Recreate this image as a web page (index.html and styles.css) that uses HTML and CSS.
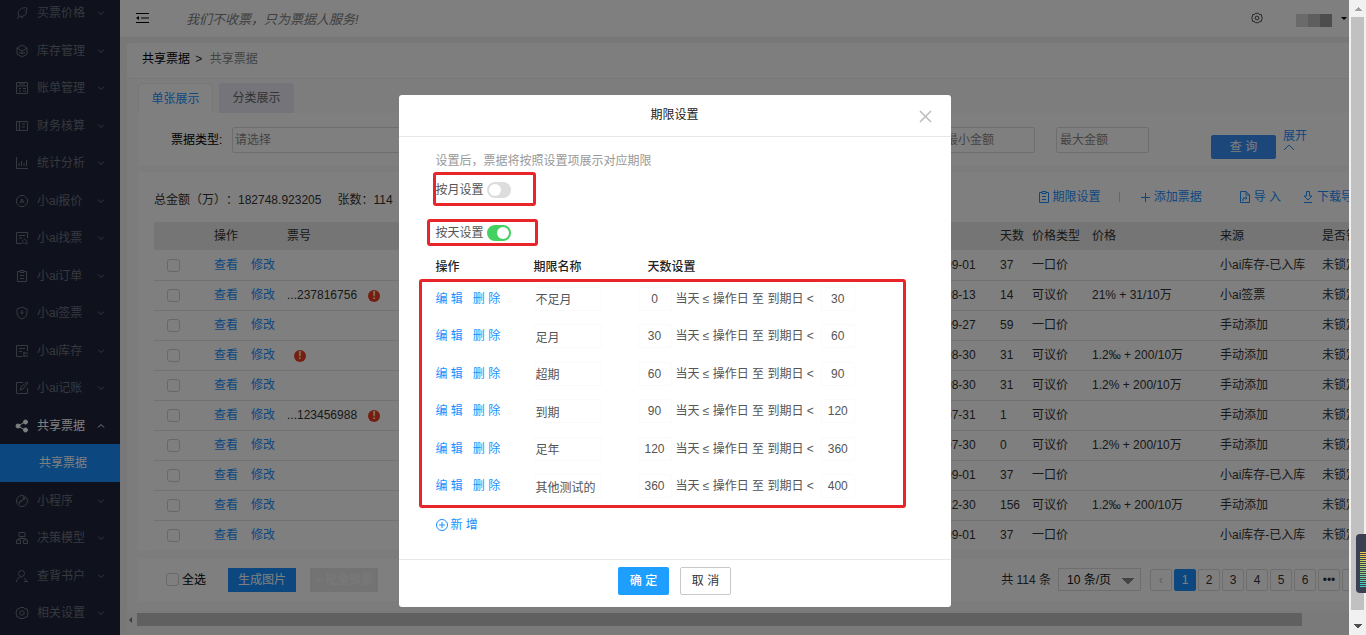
FILE: index.html
```html
<!DOCTYPE html>
<html lang="zh-CN">
<head>
<meta charset="utf-8">
<title>共享票据</title>
<link rel="stylesheet" href="styles.css">
</head>
<body>
<svg class="defs" aria-hidden="true">
  <symbol id="chev" viewBox="0 0 8 8"><path d="M1 2.5 4 5.5 7 2.5"/></symbol>
  <symbol id="rocket" viewBox="0 0 14 14"><path d="M12 2C8 1 4 3 3 7l1 3c2 1 6 0 7-2zM4 10l-2 3M9 5h.5M6 12l2-1"/></symbol>
  <symbol id="cube" viewBox="0 0 14 14"><path d="M7 1l5 3v6l-5 3-5-3V4zM2 4l5 3 5-3M7 7v3M4 8l3 2 3-2"/></symbol>
  <symbol id="bill" viewBox="0 0 14 14"><path d="M1.5 1.5h11v11h-11zM1.500 5h11M4 7.500h2M8 7.500h3M4 10h2M8 10h3M4 3h6"/></symbol>
  <symbol id="book" viewBox="0 0 14 14"><path d="M1.500 2.500h11v9h-11zM4.500 2.500v9M7 5h3M7 8h3"/></symbol>
  <symbol id="chart" viewBox="0 0 14 14"><path d="M1.500 1v11.500H13M4 10V7M6.500 10V5M9 10V7M11.500 10V4"/></symbol>
  <symbol id="tag" viewBox="0 0 14 14"><path d="M5 1.500h4L12.500 5v4L9 12.500H5L1.500 9V5zM5 9l2-4 2 4M6 8h2"/></symbol>
  <symbol id="find" viewBox="0 0 14 14"><path d="M12.500 7V1.500h-11v11H7M4 4.500h6M4 7h3M9.500 8.500a2 2 0 1 0 .1 0M11 12l2 1.500"/></symbol>
  <symbol id="clip" viewBox="0 0 14 14"><path d="M5 2.500H2.500v10h9v-10H9M5 1.500h4v2H5zM5 6.500h4M5 9.500h4"/></symbol>
  <symbol id="shield" viewBox="0 0 14 14"><path d="M7 1l5 2v4c0 3-2 5-5 6-3-1-5-3-5-6V3zM7 4v4M5.500 6.500 7 8l1.500-1.500"/></symbol>
  <symbol id="store" viewBox="0 0 14 14"><path d="M12.500 7V1.500h-11v11H7M4 4.500h6M4 7.500h3M8 9h5M8 12h5M9 8v5"/></symbol>
  <symbol id="edit" viewBox="0 0 14 14"><path d="M8 1.500H1.500v11h11V7M5 9l1-3 6-5 1 1-5 6z"/></symbol>
  <symbol id="share" viewBox="0 0 14 14"><path d="M3 7l7-4M3 7l7 4"/><circle class="dot" cx="3" cy="7" r="2"/><circle class="dot" cx="10.500" cy="3" r="2"/><circle class="dot" cx="10.500" cy="11" r="2"/></symbol>
  <symbol id="mini" viewBox="0 0 14 14"><circle cx="7" cy="7" r="5.500"/><path d="M5 10c-2-1-1-3 1-3s3-3 2-4 4 1 1 3M4 9l6-5"/></symbol>
  <symbol id="model" viewBox="0 0 14 14"><path d="M4 1.500h6v4H4zM1.500 9h4v3.500h-4zM8.500 9h4v3.500h-4zM7 5.500v2M3.500 9V7.500h7V9"/></symbol>
  <symbol id="user" viewBox="0 0 14 14"><circle cx="6.500" cy="4.500" r="3"/><path d="M1.500 13c0-3 2-5 5-5M9 9l4 4M9 12.500h4"/></symbol>
  <symbol id="gear" viewBox="0 0 14 14"><path d="M5 1.500h4l1 1.500h2l1 4-1 4h-2l-1 1.500H5L4 11H2L1 7l1-4h2z"/><circle cx="7" cy="7" r="2.200"/></symbol>
  <symbol id="import" viewBox="0 0 14 14"><path d="M8 1.500H2.500v11h9V5zM8 1.500V5h3.500M5 11V8h4M7.500 6.500 9 8 7.500 9.500"/></symbol>
  <symbol id="down" viewBox="0 0 14 14"><path d="M5.500 1.500h3V6h2.500L7 10 3 6h2.500zM3 12.500h8"/></symbol>
</svg>

<div class="screen">
  <nav class="sidebar">
    <ul class="menu">
      <li><svg><use href="#rocket"/></svg><span>买票价格</span><svg class="chev"><use href="#chev"/></svg></li>
      <li><svg><use href="#cube"/></svg><span>库存管理</span><svg class="chev"><use href="#chev"/></svg></li>
      <li><svg><use href="#bill"/></svg><span>账单管理</span><svg class="chev"><use href="#chev"/></svg></li>
      <li><svg><use href="#book"/></svg><span>财务核算</span><svg class="chev"><use href="#chev"/></svg></li>
      <li><svg><use href="#chart"/></svg><span>统计分析</span><svg class="chev"><use href="#chev"/></svg></li>
      <li><svg><use href="#tag"/></svg><span>小ai报价</span><svg class="chev"><use href="#chev"/></svg></li>
      <li><svg><use href="#find"/></svg><span>小ai找票</span><svg class="chev"><use href="#chev"/></svg></li>
      <li><svg><use href="#clip"/></svg><span>小ai订单</span><svg class="chev"><use href="#chev"/></svg></li>
      <li><svg><use href="#shield"/></svg><span>小ai签票</span><svg class="chev"><use href="#chev"/></svg></li>
      <li><svg><use href="#store"/></svg><span>小ai库存</span><svg class="chev"><use href="#chev"/></svg></li>
      <li><svg><use href="#edit"/></svg><span>小ai记账</span><svg class="chev"><use href="#chev"/></svg></li>
      <li class="open"><svg><use href="#share"/></svg><span>共享票据</span><svg class="chev"><use href="#chev"/></svg></li>
      <li class="current"><a href="#">共享票据</a></li>
      <li><svg><use href="#mini"/></svg><span>小程序</span><svg class="chev"><use href="#chev"/></svg></li>
      <li><svg><use href="#model"/></svg><span>决策模型</span><svg class="chev"><use href="#chev"/></svg></li>
      <li><svg><use href="#user"/></svg><span>查背书户</span><svg class="chev"><use href="#chev"/></svg></li>
      <li><svg><use href="#gear"/></svg><span>相关设置</span><svg class="chev"><use href="#chev"/></svg></li>
    </ul>
  </nav>

  <main class="main">
    <header class="topbar">
      <svg class="burger" viewBox="0 0 13 12"><path d="M0 1.500h13M5 6h8M0 10.500h13"/><path class="tri" d="M0 6l3-2v4z"/></svg>
      <em class="slogan">我们不收票，只为票据人服务!</em>
      <svg class="gear"><use href="#gear"/></svg>
      <span class="avatar"><i></i><i></i><i></i></span>
      <span class="caret"></span>
    </header>
    <div class="page">
      <div class="crumbs"><a href="#">共享票据</a> <span>&gt;</span> <span class="here">共享票据</span></div>
      <div class="content">
        <div class="tabs"><button class="tab on">单张展示</button><button class="tab">分类展示</button></div>
        <form class="search">
          <label for="type">票据类型:</label>
          <input id="type" class="wide" placeholder="请选择">
          <input class="amount first" aria-label="最小金额" placeholder="最小金额">
          <input class="amount" aria-label="最大金额" placeholder="最大金额">
          <button type="button" class="query">查 询</button>
          <a href="#" class="expand">展开<svg viewBox="0 0 12 8"><path d="M1 7 6 2 11 7"/></svg></a>
        </form>
        <section class="card">
          <div class="summary">
            <p><span>总金额（万）：182748.923205</span><span>张数：114</span></p>
            <div class="tools">
              <a href="#"><svg><use href="#clip"/></svg>期限设置</a><i></i>
              <a href="#" class="add"><svg viewBox="0 0 14 14"><path d="M3 7.500h9M7.500 3v9"/></svg>添加票据</a>
              <a href="#" class="imp"><svg><use href="#import"/></svg>导 入</a>
              <a href="#"><svg><use href="#down"/></svg>下载导出</a>
            </div>
          </div>
          <table class="bills">
            <colgroup><col class="c1"><col class="c2"><col class="c3"><col><col class="c4"><col class="c5"><col class="c6"><col class="c7"><col class="c8"><col class="c9"></colgroup>
            <thead><tr><th></th><th>操作</th><th>票号</th><th></th><th></th><th>天数</th><th>价格类型</th><th>价格</th><th>来源</th><th>是否锁定</th></tr></thead>
            <tbody>
              <tr><td><input type="checkbox" aria-label="选择"></td><td><a href="#">查看</a><a href="#">修改</a></td><td></td><td></td><td>09-01</td><td>37</td><td>一口价</td><td></td><td>小ai库存-已入库</td><td>未锁定</td></tr>
              <tr><td><input type="checkbox" aria-label="选择"></td><td><a href="#">查看</a><a href="#">修改</a></td><td>...237816756<b>!</b></td><td></td><td>08-13</td><td>14</td><td>可议价</td><td>21% + 31/10万</td><td>小ai签票</td><td>未锁定</td></tr>
              <tr><td><input type="checkbox" aria-label="选择"></td><td><a href="#">查看</a><a href="#">修改</a></td><td></td><td></td><td>09-27</td><td>59</td><td>一口价</td><td></td><td>手动添加</td><td>未锁定</td></tr>
              <tr><td><input type="checkbox" aria-label="选择"></td><td><a href="#">查看</a><a href="#">修改</a></td><td><b class="solo">!</b></td><td></td><td>08-30</td><td>31</td><td>可议价</td><td>1.2‰ + 200/10万</td><td>手动添加</td><td>未锁定</td></tr>
              <tr><td><input type="checkbox" aria-label="选择"></td><td><a href="#">查看</a><a href="#">修改</a></td><td></td><td></td><td>08-30</td><td>31</td><td>可议价</td><td>1.2% + 200/10万</td><td>手动添加</td><td>未锁定</td></tr>
              <tr><td><input type="checkbox" aria-label="选择"></td><td><a href="#">查看</a><a href="#">修改</a></td><td>...123456988<b>!</b></td><td></td><td>07-31</td><td>1</td><td>可议价</td><td></td><td>手动添加</td><td>未锁定</td></tr>
              <tr><td><input type="checkbox" aria-label="选择"></td><td><a href="#">查看</a><a href="#">修改</a></td><td></td><td></td><td>07-30</td><td>0</td><td>可议价</td><td>1.2% + 200/10万</td><td>手动添加</td><td>未锁定</td></tr>
              <tr><td><input type="checkbox" aria-label="选择"></td><td><a href="#">查看</a><a href="#">修改</a></td><td></td><td></td><td>09-01</td><td>37</td><td>一口价</td><td></td><td>小ai库存-已入库</td><td>未锁定</td></tr>
              <tr><td><input type="checkbox" aria-label="选择"></td><td><a href="#">查看</a><a href="#">修改</a></td><td></td><td></td><td>12-30</td><td>156</td><td>可议价</td><td>1.2‰ + 200/10万</td><td>手动添加</td><td>未锁定</td></tr>
              <tr><td><input type="checkbox" aria-label="选择"></td><td><a href="#">查看</a><a href="#">修改</a></td><td></td><td></td><td>09-01</td><td>37</td><td>一口价</td><td></td><td>小ai库存-已入库</td><td>未锁定</td></tr>
            </tbody>
          </table>
        </section>
        <section class="bottom">
          <label class="all"><input type="checkbox">全选</label>
          <button class="make">生成图片</button>
          <button class="off" disabled>+ 批量锁票</button>
          <span class="total">共 114 条</span>
          <select aria-label="每页条数"><option>10 条/页</option></select>
          <div class="pages"><button class="dim">‹</button><button class="on">1</button><button>2</button><button>3</button><button>4</button><button>5</button><button>6</button><button>•••</button><button>›</button></div>
        </section>
      </div>
      <div class="hscroll"><i></i><span></span></div>
    </div>
  </main>

  <div class="mask">
    <div class="modal" role="dialog" aria-labelledby="dlg">
      <header><h2 id="dlg">期限设置</h2><button class="close" aria-label="关闭"><svg viewBox="0 0 13 13"><path d="M1 1l11 11M12 1 1 12"/></svg></button></header>
      <div class="body">
        <p class="tip">设置后，票据将按照设置项展示对应期限</p>
        <label class="switch month">按月设置<input type="checkbox"></label>
        <label class="switch day">按天设置<input type="checkbox" checked></label>
        <table class="terms">
          <colgroup><col class="op"><col class="nm"><col></colgroup>
          <thead><tr><th>操作</th><th>期限名称</th><th class="days">天数设置</th></tr></thead>
          <tbody>
            <tr><td><button>编 辑</button><button>删 除</button></td><td><input class="name" aria-label="期限名称" value="不足月" readonly></td><td><input aria-label="起始天数" value="0" readonly><span>当天 ≤ 操作日 至 到期日 &lt;</span><input aria-label="截止天数" value="30" readonly></td></tr>
            <tr><td><button>编 辑</button><button>删 除</button></td><td><input class="name" aria-label="期限名称" value="足月" readonly></td><td><input aria-label="起始天数" value="30" readonly><span>当天 ≤ 操作日 至 到期日 &lt;</span><input aria-label="截止天数" value="60" readonly></td></tr>
            <tr><td><button>编 辑</button><button>删 除</button></td><td><input class="name" aria-label="期限名称" value="超期" readonly></td><td><input aria-label="起始天数" value="60" readonly><span>当天 ≤ 操作日 至 到期日 &lt;</span><input aria-label="截止天数" value="90" readonly></td></tr>
            <tr><td><button>编 辑</button><button>删 除</button></td><td><input class="name" aria-label="期限名称" value="到期" readonly></td><td><input aria-label="起始天数" value="90" readonly><span>当天 ≤ 操作日 至 到期日 &lt;</span><input aria-label="截止天数" value="120" readonly></td></tr>
            <tr><td><button>编 辑</button><button>删 除</button></td><td><input class="name" aria-label="期限名称" value="足年" readonly></td><td><input aria-label="起始天数" value="120" readonly><span>当天 ≤ 操作日 至 到期日 &lt;</span><input aria-label="截止天数" value="360" readonly></td></tr>
            <tr><td><button>编 辑</button><button>删 除</button></td><td><input class="name" aria-label="期限名称" value="其他测试的" readonly></td><td><input aria-label="起始天数" value="360" readonly><span>当天 ≤ 操作日 至 到期日 &lt;</span><input aria-label="截止天数" value="400" readonly></td></tr>
          </tbody>
        </table>
        <button class="new"><svg viewBox="0 0 14 14"><circle cx="7" cy="7" r="5.500"/><path d="M4 7h6M7 4v6"/></svg>新 增</button>
      </div>
      <footer><button class="ok">确 定</button><button class="cancel">取 消</button></footer>
      <i class="mark m1"></i><i class="mark m2"></i><i class="mark m3"></i>
    </div>
  </div>
</div>
<div class="vscroll"><i class="up"></i><span></span><i class="dn"></i><div class="meter"><i></i></div></div>
</body>
</html>
```

FILE: styles.css
```css
* { box-sizing: border-box; }
body {
  margin: 0; display: flex; height: 100vh; overflow: hidden;
  font: 12px/18px "Liberation Sans", "Noto Sans CJK SC", sans-serif; color: #333;
  text-spacing-trim: space-all;
}
button, input, select { font: inherit; color: inherit; margin: 0; }
button { padding: 0; border: 0; background: none; white-space: nowrap; }
a { color: #1890ff; text-decoration: none; }
p, h2 { margin: 0; }
svg { width: 14px; height: 14px; fill: none; stroke: currentColor; stroke-width: 1; flex: none; }
.dot, .tri { fill: currentColor; }
.tri { stroke: none; }
.defs { position: absolute; width: 0; height: 0; }
.screen { flex: 1; min-width: 0; display: flex; position: relative; overflow: hidden; }

/* sidebar */
.sidebar { width: 120px; flex: none; background: #1e2338; color: #6c7280; overflow: hidden; }
.menu { list-style: none; margin: -6px 0 0; padding: 0; }
.menu li { height: 37px; display: flex; align-items: center; padding-left: 15px; gap: 8px; }
.menu li:nth-child(odd) { height: 38px; }
.menu span { width: 52px; }
.menu .chev { width: 8px; height: 8px; }
.menu .open { color: #fff; }
.menu .open .chev { transform: rotate(180deg); }
.menu .current { background: #1890ff; padding-left: 39px; }
.current a { color: #fff; }

/* page frame */
.main { flex: 1; min-width: 0; display: flex; flex-direction: column; background: #f0f0f0; }
.topbar { height: 38px; background: #fff; border-bottom: 1px solid #eaeaea; display: flex; align-items: center; padding: 0 0 1px 16px; flex: none; }
.burger { width: 13px; height: 12px; color: #000; }
.slogan { margin: 3px 0 0 37px; font-size: 13px; color: #808080; }
.gear { margin-left: auto; width: 12px; height: 12px; }
.avatar { display: flex; margin: 4px 9px 0 33px; }
.avatar i { width: 12px; height: 13px; background: #d4d4d4; }
.avatar i:nth-child(2) { background: #bcbcbc; }
.avatar i:nth-child(3) { background: #9a9a9a; }
.caret { border: 3px solid transparent; border-top-color: #000; margin: 4px 2px 0 0; }
.page { margin: 5px 0 0 7px; background: #fdfdfd; flex: 1; min-height: 0; border-radius: 4px 0 0 0; overflow: hidden; display: flex; flex-direction: column; }
.crumbs { height: 36px; padding: 7px 15px 0; border-bottom: 1px solid #eee; flex: none; }
.crumbs a { color: #000; }
.crumbs span { margin: 0 2px; }
.crumbs .here { color: #888; }
.content { width: calc(100% + 32px); padding-left: 11px; border-left: 1px solid #e8e8e8; margin-left: -1px; flex: 1; background: #f8f8f8; }

/* filters */
.tabs { display: flex; gap: 6px; padding-top: 4px; height: 34px; background: #fafafa; }
.tab { width: 75px; color: #666; background: #e9e8f4; border-radius: 4px 4px 0 0; }
.tab.on { color: #1890ff; background: #fff; border: 1px solid #eee; border-bottom: 0; }
.search { height: 53px; background: #fff; display: flex; align-items: center; padding: 0 73px 0 33px; }
.search label { width: 61px; color: #000; }
.search input { height: 26px; border: 1px solid #ddd; background: #fff; padding: 0 3px; border-radius: 2px; }
.search ::placeholder { color: #888; opacity: 1; }
.search .wide { width: 200px; padding: 0 2px; }
.amount { width: 93px; margin-right: 21px; }
.first { margin-left: auto; }
.query { width: 65px; height: 24px; margin: 15px 7px 0 41px; background: #388ff5; color: #fff; border-radius: 2px; }
.expand { width: 24px; line-height: 14px; display: flex; flex-direction: column; }
.expand svg { width: 12px; height: 8px; }

/* list */
.card { margin-top: 6px; background: #fff; padding: 16px 15px 0 16px; }
.summary { display: flex; justify-content: space-between; height: 34px; white-space: nowrap; }
.summary p { display: flex; gap: 16px; padding-top: 3px; }
.tools { display: flex; height: 18px; align-items: center; }
.tools a { display: flex; align-items: center; gap: 2px; }
.tools i { width: 1px; height: 10px; background: #ccc; margin: 0 18px; }
.tools .add { margin-right: 36px; }
.tools .imp { margin-right: 20px; }
.bills { width: 100%; table-layout: fixed; border-collapse: collapse; white-space: nowrap; }
.c1 { width: 60px; } .c2 { width: 73px; } .c3 { width: 100px; } .c4 { width: 55px; } .c5 { width: 32px; }
.c6 { width: 60px; } .c7 { width: 128px; } .c8 { width: 102px; } .c9 { width: 43px; }
.bills th, .bills td { height: 30px; padding: 0; text-align: left; font-weight: 400; border-bottom: 1px solid #e4e4e4; }
.bills th { height: 28px; background: #eaeaea; border: 0; }
.bills a { margin-right: 13px; }
.bills tbody tr:last-child td { border-bottom-color: #f4f4f4; }
input[type=checkbox] { appearance: none; width: 13px; height: 13px; border: 1px solid #d0d0d0; border-radius: 3px; background: #fff; vertical-align: middle; }
.bills input { margin-left: 13px; }
.bills b { display: inline-block; width: 12px; height: 12px; border-radius: 50%; background: #e93e22; color: #fff; line-height: 12px; text-align: center; font-size: 10px; margin-left: 11px; }
.bills .solo { margin-left: 7px; }
.bottom { margin-top: 8px; height: 42px; background: #fff; display: flex; align-items: center; padding: 0 16px 0 28px; white-space: nowrap; }
.all { display: flex; align-items: center; gap: 3px; color: #000; }
.make { width: 68px; height: 24px; margin: 0 14px 0 22px; background: #1890ff; color: #fff; }
.off { width: 68px; height: 24px; background: #e6e6e6; color: #f4f4f4; }
.total { margin: 0 7px 0 auto; }
.bottom select {
  appearance: none; width: 83px; height: 23px; border: 1px solid #ddd; padding: 0 8px; color: #111; margin-right: 9px;
  background: conic-gradient(from -45deg at 50% 100%, #888 90deg, transparent 0) 63px 9px / 12px 6px no-repeat #fff;
  background: conic-gradient(from -45deg at 50% 100%, #888 90deg, #fff 0) 63px 9px / 12px 6px no-repeat #fff;
}
.pages { display: flex; gap: 2px; }
.pages button { width: 22px; height: 22px; border: 1px solid #ddd; border-radius: 2px; }
.pages .on { background: #1890ff; color: #fff; border-color: #1890ff; }
.pages .dim { color: #bbb; }
.hscroll { height: 24px; flex: none; background: #f4f4f4; padding: 0 47px 7px 2px; display: flex; align-items: center; gap: 5px; }
.hscroll i { border: 3px solid transparent; border-right-color: #777; margin-left: -3px; }
.hscroll span { flex: 1; height: 13px; background: #c1c1c1; }

/* dialog */
.mask { position: absolute; inset: 0; background: rgba(0, 0, 0, .5); display: flex; justify-content: center; align-items: flex-start; padding-top: 95px; }
.modal { width: 552px; background: #fff; border-radius: 3px; position: relative; color: #555; }
.modal header { height: 42px; padding-top: 10px; border-bottom: 1px solid #e8e8e8; display: flex; }
.modal h2 { flex: 1; padding-left: 32px; font: inherit; line-height: 20px; color: #222; text-align: center; }
.close { width: 30px; height: 22px; color: #bbb; display: flex; align-items: center; margin-right: 2px; }
.close svg { width: 13px; height: 13px; stroke-width: 1.5; }
.body { padding: 15px 37px 25px; height: 422px; }
.tip { color: #999; }
.switch { display: flex; align-items: center; gap: 3px; margin-top: 11px; }
.day { margin-top: 25px; }
.switch input { width: 24px; height: 16px; border: 0; border-radius: 8px; background: #ddd; display: flex; align-items: center; padding: 0 2px; }
.switch input::before { content: ""; width: 12px; height: 12px; border-radius: 50%; background: #fff; }
.switch input:checked { background: #43d160; justify-content: flex-end; }
.terms { width: 100%; table-layout: fixed; border-collapse: collapse; margin-top: 16px; }
.op { width: 98px; } .nm { width: 104px; }
.terms th { height: 22px; padding: 0; text-align: left; vertical-align: top; font-weight: 500; color: #222; }
.terms .days { padding-left: 10px; }
.terms td { height: 37px; padding: 0; white-space: nowrap; vertical-align: middle; }
.terms tr:nth-child(even) td { height: 38px; }
.terms button { color: #1890ff; margin-right: 10px; }
.terms button, .terms span, .terms input { vertical-align: middle; }
.terms input { width: 34px; height: 24px; border: 1px solid #fbfbfb; border-radius: 2px; padding: 0; text-align: center; background: #fff; }
.terms .name { width: 68px; padding-left: 1px; text-align: left; }
.terms span { margin: 0 7px 0 4px; }
.new { display: flex; align-items: center; color: #1890ff; margin: 11px 0 0 -1px; gap: 2px; }
.modal footer { height: 48px; border-top: 1px solid #e8e8e8; padding-top: 7px; display: flex; justify-content: center; gap: 11px; }
.modal footer button { width: 51px; height: 28px; border-radius: 2px; }
.ok { background: #1e9fff; color: #fff; font-weight: 500; }
.modal .cancel { border: 1px solid #c9c9c9; color: #333; }
.mark { position: absolute; border: 3px solid #e8252b; border-radius: 3px; pointer-events: none; }
.m1 { left: 34px; top: 77px; width: 103px; height: 34px; }
.m2 { left: 28px; top: 124px; width: 111px; height: 27px; }
.m3 { left: 20px; top: 184px; width: 487px; height: 229px; }

/* window scrollbar */
.vscroll { width: 17px; flex: none; background: #f1f1f1; position: relative; display: flex; flex-direction: column; align-items: center; }
.vscroll > i { height: 17px; width: 8px; }
.vscroll .up { background: conic-gradient(from 135deg at 50% 0, #a0a0a0 90deg, transparent 0) 0 7px / 8px 4px no-repeat; }
.vscroll .dn { height: 25px; background: conic-gradient(from -45deg at 50% 100%, #505050 90deg, transparent 0) 0 14px / 8px 4px no-repeat; }
.vscroll span { flex: 1; width: 13px; background: #c1c1c1; }
.meter { position: absolute; right: 0; bottom: 42px; width: 10px; height: 59px; background: #3b3f52; border-radius: 4px 0 0 4px; padding: 18px 0 6px 4px; }
.meter i { display: block; height: 100%; background: repeating-linear-gradient(transparent 0 1px, #3b3f52 1px 2px), linear-gradient(#f5c84c, #b9d66a 40%, #2fd0c8); }
```
